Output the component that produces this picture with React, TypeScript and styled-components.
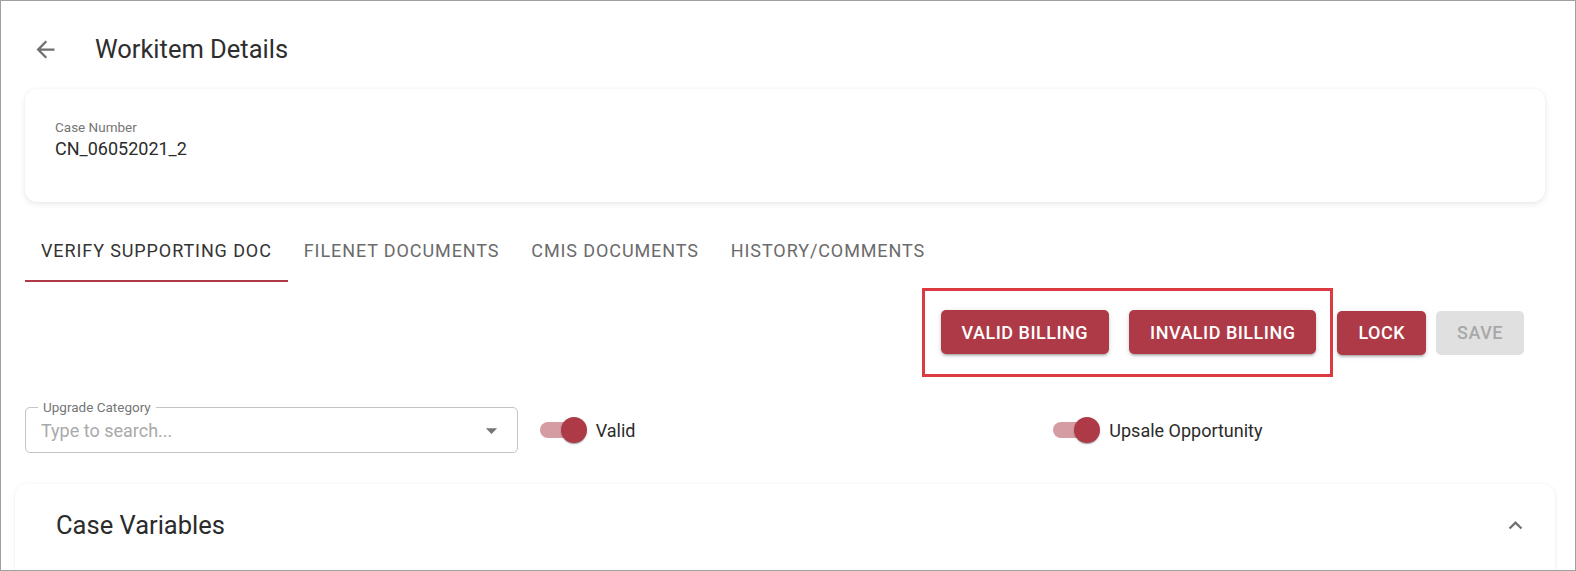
import styled, { createGlobalStyle } from "styled-components";

const GlobalStyle = createGlobalStyle`
  * {
    box-sizing: border-box;
  }
  body {
    margin: 0;
    background: #ffffff;
    font-family: Roboto, "Liberation Sans", Arial, sans-serif;
  }
`;

const theme = {
  primary: "#ae3a47",
  primaryLight: "#d69ca3",
  text: "#2b2b2b",
  muted: "#767676",
};

const Frame = styled.div`
  width: 1576px;
  height: 571px;
  border: 1px solid #a0a0a0;
  overflow: hidden;
  background: #ffffff;
  color: ${theme.text};
`;

const Header = styled.header`
  display: flex;
  align-items: center;
  height: 54px;
  margin-top: 21px;
  padding-left: 31px;
`;

const BackButton = styled.button`
  display: flex;
  align-items: center;
  justify-content: center;
  width: 27px;
  height: 27px;
  padding: 0;
  border: none;
  background: none;
  color: #6f6f6f;
  cursor: pointer;
`;

const Title = styled.h1`
  margin: 0 0 0 36px;
  font-size: 25.5px;
  font-weight: 400;
  color: #2e2e2e;
`;

const Main = styled.main`
  margin: 13px 30px 0 24px;
`;

const InfoCard = styled.section`
  height: 113px;
  padding: 30px 30px 0;
  border-radius: 12px;
  background: #ffffff;
  box-shadow: 0 2px 6px rgba(0, 0, 0, 0.09), 0 0 3px rgba(0, 0, 0, 0.03);
`;

const FieldLabel = styled.div`
  font-size: 13.5px;
  line-height: 16px;
  color: ${theme.muted};
`;

const FieldValue = styled.div`
  margin-top: 3px;
  font-size: 18px;
  line-height: 22px;
  color: ${theme.text};
`;

const TabList = styled.nav`
  display: flex;
  height: 56px;
  margin-top: 24px;
`;

const Tab = styled.div<{ $active?: boolean }>`
  height: 56px;
  padding: 14px 16px 0;
  font-size: 18px;
  line-height: 22px;
  letter-spacing: 0.9px;
  text-transform: uppercase;
  color: ${(p) => (p.$active ? "#333333" : "#6b6b6b")};
  border-bottom: 2px solid ${(p) => (p.$active ? theme.primary : "transparent")};
  cursor: pointer;
`;

const ButtonRow = styled.div`
  display: flex;
  justify-content: flex-end;
  align-items: center;
  margin-top: 6px;
  padding-right: 21px;
`;

const HighlightBox = styled.div`
  display: flex;
  gap: 20px;
  margin-right: 4px;
  padding: 19px 14px 20px 16px;
  border: 3px solid #dc3a42;
`;

const ActionButton = styled.button<{ $disabled?: boolean }>`
  height: 44px;
  padding: 0 21px;
  border: none;
  border-radius: 5px;
  font-family: inherit;
  font-size: 18px;
  font-weight: 500;
  letter-spacing: 0.5px;
  text-transform: uppercase;
  background: ${(p) => (p.$disabled ? "#e0e0e0" : theme.primary)};
  color: ${(p) => (p.$disabled ? "#a8a8a8" : "#ffffff")};
  box-shadow: ${(p) =>
    p.$disabled
      ? "none"
      : "0 3px 2px -2px rgba(0,0,0,0.2), 0 2px 3px 0 rgba(0,0,0,0.14), 0 1px 6px 0 rgba(0,0,0,0.1)"};
  cursor: pointer;
`;

const SaveButton = styled(ActionButton)`
  margin-left: 10px;
`;

const FilterRow = styled.div`
  display: grid;
  grid-template-columns: repeat(3, 1fr);
  column-gap: 21px;
  align-items: center;
  margin-top: 30px;
`;

const Outlined = styled.div`
  position: relative;
  display: flex;
  align-items: center;
  height: 46px;
  padding: 0 12px 0 15px;
  border: 1px solid #c4c4c4;
  border-radius: 5px;
`;

const NotchLabel = styled.span`
  position: absolute;
  top: -9px;
  left: 12px;
  padding: 0 5px;
  background: #ffffff;
  font-size: 13.5px;
  line-height: 16px;
  color: ${theme.muted};
`;

const SearchInput = styled.input`
  flex: 1;
  min-width: 0;
  border: none;
  outline: none;
  padding: 0;
  font-family: inherit;
  font-size: 18px;
  color: ${theme.text};
  &::placeholder {
    color: #a9a9a9;
  }
`;

const DropIcon = styled.span`
  display: flex;
  color: #757575;
`;

const SwitchField = styled.label`
  display: flex;
  align-items: center;
  padding-left: 1px;
  font-size: 18px;
  color: ${theme.text};
  cursor: pointer;
`;

const SwitchTrack = styled.span`
  position: relative;
  display: block;
  width: 47px;
  height: 26px;
  margin-right: 9px;
  &::before {
    content: "";
    position: absolute;
    left: 0;
    top: 5px;
    width: 41px;
    height: 16px;
    border-radius: 8px;
    background: ${theme.primaryLight};
  }
`;

const SwitchThumb = styled.span`
  position: absolute;
  right: 0;
  top: 0;
  width: 26px;
  height: 26px;
  border-radius: 50%;
  background: ${theme.primary};
  box-shadow: 0 2px 1px -1px rgba(0, 0, 0, 0.2), 0 1px 1px 0 rgba(0, 0, 0, 0.14),
    0 1px 3px 0 rgba(0, 0, 0, 0.12);
`;

const SectionCard = styled.section`
  display: flex;
  align-items: flex-start;
  justify-content: space-between;
  height: 120px;
  margin: 31px 20px 0 14px;
  padding: 26px 26px 0 41px;
  border-radius: 12px;
  background: #ffffff;
  box-shadow: 0 1px 5px rgba(0, 0, 0, 0.07), 0 0 2px rgba(0, 0, 0, 0.03);
`;

const SectionTitle = styled.h2`
  margin: 0;
  font-size: 25.5px;
  font-weight: 400;
  line-height: 30px;
  color: #2b2b2b;
`;

const Chevron = styled.span`
  display: flex;
  margin-top: 2px;
  color: #6f6f6f;
`;

function Toggle({ label }: { label: string }) {
  return (
    <SwitchField>
      <SwitchTrack>
        <SwitchThumb />
      </SwitchTrack>
      {label}
    </SwitchField>
  );
}

const tabs = [
  "Verify Supporting Doc",
  "Filenet Documents",
  "CMIS Documents",
  "History/Comments",
];

export default function App() {
  return (
    <>
      <GlobalStyle />
      <Frame>
        <Header>
          <BackButton aria-label="back">
            <svg width="27" height="27" viewBox="0 0 24 24" fill="currentColor">
              <path d="M20 11H7.83l5.59-5.59L12 4l-8 8 8 8 1.41-1.41L7.83 13H20v-2z" />
            </svg>
          </BackButton>
          <Title>Workitem Details</Title>
        </Header>
        <Main>
          <InfoCard>
            <FieldLabel>Case Number</FieldLabel>
            <FieldValue>CN_06052021_2</FieldValue>
          </InfoCard>
          <TabList>
            {tabs.map((t, i) => (
              <Tab key={t} $active={i === 0}>
                {t}
              </Tab>
            ))}
          </TabList>
          <ButtonRow>
            <HighlightBox>
              <ActionButton>Valid Billing</ActionButton>
              <ActionButton>Invalid Billing</ActionButton>
            </HighlightBox>
            <ActionButton>Lock</ActionButton>
            <SaveButton $disabled>Save</SaveButton>
          </ButtonRow>
          <FilterRow>
            <Outlined>
              <NotchLabel>Upgrade Category</NotchLabel>
              <SearchInput placeholder="Type to search..." />
              <DropIcon>
                <svg width="27" height="27" viewBox="0 0 24 24" fill="currentColor">
                  <path d="M7 10l5 5 5-5z" />
                </svg>
              </DropIcon>
            </Outlined>
            <Toggle label="Valid" />
            <Toggle label="Upsale Opportunity" />
          </FilterRow>
        </Main>
        <SectionCard>
          <SectionTitle>Case Variables</SectionTitle>
          <Chevron>
            <svg width="27" height="27" viewBox="0 0 24 24" fill="currentColor">
              <path d="M12 8l-6 6 1.41 1.41L12 10.83l4.59 4.58L18 14z" />
            </svg>
          </Chevron>
        </SectionCard>
      </Frame>
    </>
  );
}
